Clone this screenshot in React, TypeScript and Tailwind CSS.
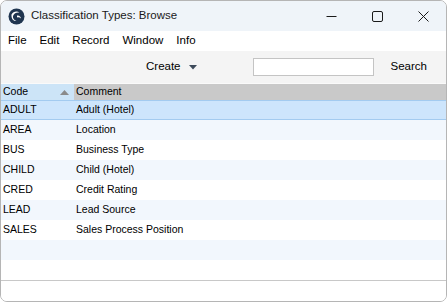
const rows = [
  { code: "ADULT", comment: "Adult (Hotel)" },
  { code: "AREA", comment: "Location" },
  { code: "BUS", comment: "Business Type" },
  { code: "CHILD", comment: "Child (Hotel)" },
  { code: "CRED", comment: "Credit Rating" },
  { code: "LEAD", comment: "Lead Source" },
  { code: "SALES", comment: "Sales Process Position" },
  { code: "", comment: "" },
  { code: "", comment: "" },
];

const AppIcon = () => (
  <svg width="17" height="17" viewBox="0 0 17 17">
    <circle cx="8.5" cy="8.5" r="8" fill="#1f3550" />
    <path d="M3.5 6.5 C5 3.5 9 2.5 11.5 4.5 C9 4 6 5 5 8 C4.5 10 6 12.5 8.5 13 C5.5 13.5 3 10.5 3.5 6.5 Z" fill="#ffffff" />
    <path d="M9 7.5 C11 7 13 8.5 13 10.5 C12 9.5 10.5 9 9 9.5 Z" fill="#ffffff" />
  </svg>
);

const TitleBar = () => (
  <div className="flex h-[30px] items-center bg-[#eff4f9]">
    <div className="ml-[7px] mr-[6px] flex items-center">
      <AppIcon />
    </div>
    <span className="text-[11.5px] text-[#1a1a1a]">Classification Types: Browse</span>
    <div className="ml-auto flex h-full items-center">
      <div className="flex w-[46px] justify-center">
        <svg width="11" height="11" viewBox="0 0 11 11">
          <line x1="0.5" y1="5.5" x2="10.5" y2="5.5" stroke="#1a1a1a" strokeWidth="1" />
        </svg>
      </div>
      <div className="flex w-[46px] justify-center">
        <svg width="11" height="11" viewBox="0 0 11 11">
          <rect x="0.5" y="0.5" width="10" height="10" rx="1.5" fill="none" stroke="#1a1a1a" strokeWidth="1" />
        </svg>
      </div>
      <div className="flex w-[46px] justify-center">
        <svg width="11" height="11" viewBox="0 0 11 11">
          <path d="M0.5 0.5 L10.5 10.5 M10.5 0.5 L0.5 10.5" stroke="#1a1a1a" strokeWidth="1" />
        </svg>
      </div>
    </div>
  </div>
);

const App = () => {
  return (
    <div className="h-[302px] w-[447px] bg-white" style={{ fontFamily: '"Liberation Sans", Arial, sans-serif' }}>
      <div className="flex h-full w-full flex-col overflow-hidden rounded-[7px] border border-[#b5b5b5] bg-white">
        <TitleBar />
        <div className="flex h-[20px] items-center gap-[13px] bg-white pl-[7px] text-[11.5px] text-black">
          <span>File</span>
          <span>Edit</span>
          <span>Record</span>
          <span>Window</span>
          <span>Info</span>
        </div>
        <div className="flex h-[32px] items-center bg-[#f4f4f4] text-[11.5px] text-black">
          <div className="ml-[145px] flex items-center gap-[8px]">
            <span>Create</span>
            <svg width="8" height="5" viewBox="0 0 8 5">
              <path d="M0 0 L8 0 L4 4.5 Z" fill="#3c4a5a" />
            </svg>
          </div>
          <div className="ml-[56px] h-[18px] w-[121px] border border-[#c4c4c4] bg-white" />
          <span className="ml-[17px]">Search</span>
        </div>
        <div className="flex h-[17px] border-t border-[#fafafa] text-[10.5px] text-black">
          <div className="flex w-[73px] items-center bg-[#cce4f7] pl-[2px]">
            <span>Code</span>
            <svg className="ml-auto mr-[5px]" width="9" height="5" viewBox="0 0 9 5">
              <path d="M0 5 L9 5 L4.5 0 Z" fill="#8a8a8a" />
            </svg>
          </div>
          <div className="flex flex-1 items-center bg-[#c9c9c9] pl-[2px]">
            <span>Comment</span>
          </div>
        </div>
        <div className="flex flex-col text-[10.5px] text-black">
          {rows.map((r, i) => (
            <div
              key={i}
              className={`flex h-[20px] items-center ${
                i === 0
                  ? "border-y border-[#a3cbf0] bg-[#cde5fc]"
                  : i % 2 === 1
                  ? "bg-[#f2f7fd]"
                  : "bg-white"
              }`}
            >
              <span className="w-[73px] pl-[2px]">{r.code}</span>
              <span className="pl-[2px]">{r.comment}</span>
            </div>
          ))}
        </div>
        <div className="flex-1 border-t border-[#c8c8c8] bg-white" />
      </div>
    </div>
  );
};

export default App;
